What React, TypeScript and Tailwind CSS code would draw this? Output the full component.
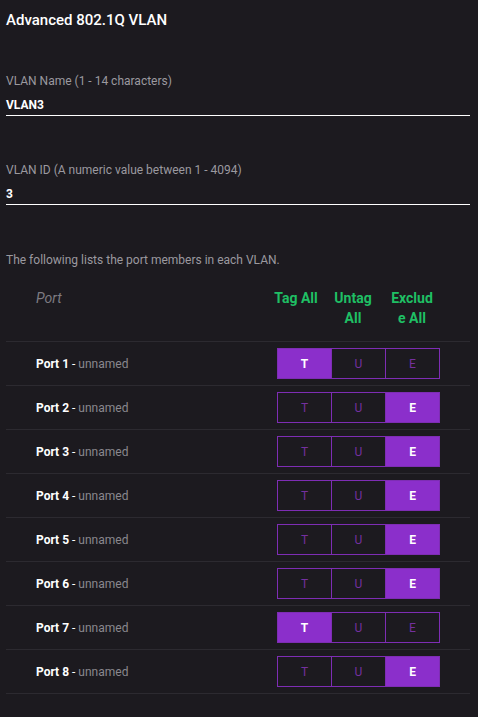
import React from 'react';

type Mode = 'T' | 'U' | 'E';

const PORTS: Mode[] = ['T', 'E', 'E', 'E', 'E', 'E', 'T', 'E'];

const Field: React.FC<{ label: string; value: string; className?: string }> = ({ label, value, className }) => (
  <div className={className}>
    <div className="text-[12px] leading-[16px] text-[#9b999f]">{label}</div>
    <div className="mt-[8px] pb-[2px] text-[12px] leading-[16px] font-bold text-white border-b border-white">{value}</div>
  </div>
);

const ModeGroup: React.FC<{ mode: Mode }> = ({ mode }) => (
  <div className="flex">
    {(['T', 'U', 'E'] as Mode[]).map((m, i) => {
      const on = m === mode;
      return (
        <div
          key={m}
          className={`h-[31px] w-[55px] flex items-center justify-center text-[12px] border border-[#7e2db4] ${
            i > 0 ? '-ml-px' : ''
          } ${on ? 'bg-[#8b2fcb] text-white font-bold' : 'text-[#74309f]'}`}
        >
          {m}
        </div>
      );
    })}
  </div>
);

export default function App() {
  return (
    <div
      className="min-h-[717px] w-full bg-[#1c1a1f] pl-[6px] pr-[8px]"
      style={{ fontFamily: 'Roboto, "Liberation Sans", sans-serif' }}
    >
      <h1 className="pt-[10px] text-[15px] leading-[20px] font-medium text-white">Advanced 802.1Q VLAN</h1>

      <Field className="mt-[43px]" label="VLAN Name (1 - 14 characters)" value="VLAN3" />
      <Field className="mt-[46px]" label="VLAN ID (A numeric value between 1 - 4094)" value="3" />

      <p className="mt-[47px] text-[12px] leading-[16px] text-[#9b999f]">
        The following lists the port members in each VLAN.
      </p>

      {/* Header */}
      <div className="mt-[20px] pb-[13px] px-[30px] flex border-b border-[#2c2a30]">
        <div className="flex-1 text-[14px] leading-[20px] italic text-[#7d7b81]">Port</div>
        <div className="flex gap-[9px] text-[14px] leading-[20px] font-bold text-[#1fbf64] text-center">
          <div className="w-[52px]">Tag All</div>
          <div className="w-[44px]">
            Untag
            <br />
            All
          </div>
          <div className="w-[56px]">
            Exclud
            <br />
            e All
          </div>
        </div>
      </div>

      {/* Port rows */}
      {PORTS.map((mode, i) => (
        <div key={i} className="h-[44px] px-[30px] flex items-center border-b border-[#2c2a30]">
          <div className="flex-1 text-[12px] text-white">
            <span className="font-bold">Port {i + 1}</span> - <span className="text-[#8a888e]">unnamed</span>
          </div>
          <ModeGroup mode={mode} />
        </div>
      ))}
    </div>
  );
}
